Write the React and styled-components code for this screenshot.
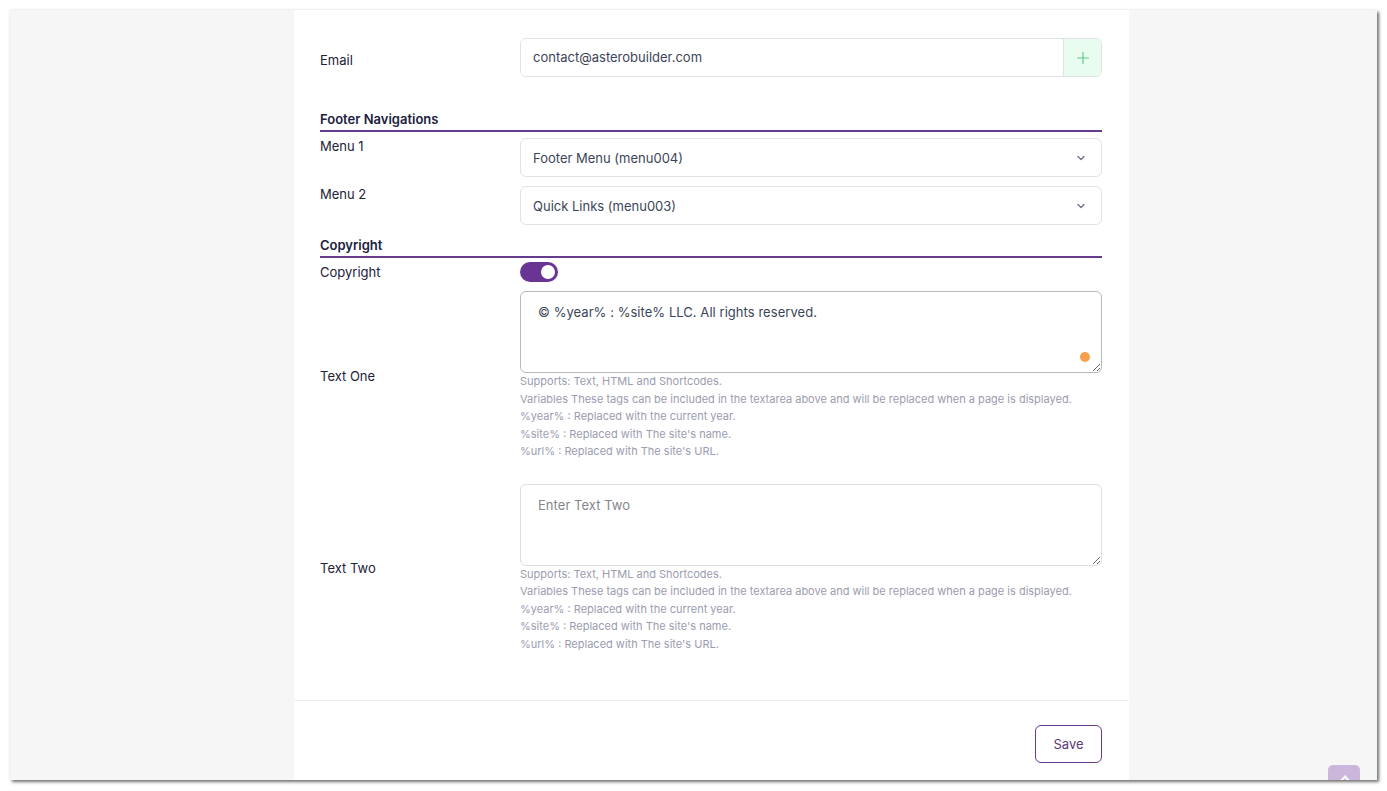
import React, { useState } from 'react';
import styled, { createGlobalStyle } from 'styled-components';

const GlobalStyle = createGlobalStyle`
  html, body {
    margin: 0;
    padding: 0;
    background: #ffffff;
  }
  body {
    font-family: Inter, "Noto Sans", "Liberation Sans", sans-serif;
    -webkit-font-smoothing: antialiased;
  }
  * {
    box-sizing: border-box;
  }
`;

const helpLines = [
  'Supports: Text, HTML and Shortcodes.',
  'Variables These tags can be included in the textarea above and will be replaced when a page is displayed.',
  '%year% : Replaced with the current year.',
  "%site% : Replaced with The site's name.",
  "%url% : Replaced with The site's URL.",
];

const ChevronDown = () => (
  <svg width="12" height="12" viewBox="0 0 24 24" fill="none" stroke="#6b6f80" strokeWidth="2.4" strokeLinecap="round" strokeLinejoin="round">
    <path d="M6 9l6 6 6-6" />
  </svg>
);

const PlusIcon = () => (
  <svg width="16" height="16" viewBox="0 0 24 24" fill="none" stroke="#5ec98c" strokeWidth="1.8" strokeLinecap="round">
    <path d="M12 4v16M4 12h16" />
  </svg>
);

const Help = () => (
  <HelpBox>
    {helpLines.map((line) => (
      <div key={line}>{line}</div>
    ))}
  </HelpBox>
);

export default function App() {
  const [copyright, setCopyright] = useState(true);

  return (
    <>
      <GlobalStyle />
      <Frame>
        <Panel>
          <Form>
            <Row $align="center" $gap="0">
              <Label $shift="4px">Email</Label>
              <InputGroup>
                <TextInput defaultValue="contact@asterobuilder.com" />
                <AddButton type="button">
                  <PlusIcon />
                </AddButton>
              </InputGroup>
            </Row>

            <SectionTitle $top="34px">Footer Navigations</SectionTitle>
            <Row $gap="6px">
              <Label>Menu 1</Label>
              <Select>
                <span>Footer Menu (menu004)</span>
                <ChevronDown />
              </Select>
            </Row>
            <Row $gap="9px">
              <Label>Menu 2</Label>
              <Select>
                <span>Quick Links (menu003)</span>
                <ChevronDown />
              </Select>
            </Row>

            <SectionTitle $top="12px">Copyright</SectionTitle>
            <Row $gap="4px">
              <Label $lh="20px">Copyright</Label>
              <Toggle $on={copyright} onClick={() => setCopyright(!copyright)} />
            </Row>

            <Row $align="center" $gap="9px">
              <Label>Text One</Label>
              <Field>
                <AreaWrap>
                  <TextArea $focused defaultValue="© %year% : %site% LLC. All rights reserved." />
                  <Dot />
                </AreaWrap>
                <Help />
              </Field>
            </Row>

            <Row $align="center" $gap="23px">
              <Label>Text Two</Label>
              <Field>
                <AreaWrap>
                  <TextArea placeholder="Enter Text Two" />
                </AreaWrap>
                <Help />
              </Field>
            </Row>
          </Form>

          <Footer>
            <SaveButton type="button">Save</SaveButton>
          </Footer>
        </Panel>
        <ScrollTop />
      </Frame>
    </>
  );
}

const Frame = styled.div`
  position: relative;
  margin: 10px;
  width: 1367px;
  height: 770px;
  background: #f6f6f6;
  overflow: hidden;
  display: flex;
  padding-left: 284px;
  box-shadow: 2px 2px 3px rgba(0, 0, 0, 0.55), 0 0 3px rgba(0, 0, 0, 0.08);
`;

const Panel = styled.div`
  width: 835px;
  background: #ffffff;
  display: flex;
  flex-direction: column;
`;

const Form = styled.div`
  display: flex;
  flex-direction: column;
  padding: 28px 27px 47px 26px;
`;

const Row = styled.div`
  display: grid;
  grid-template-columns: 200px 1fr;
  align-items: ${(p) => p.$align || 'start'};
  margin-top: ${(p) => p.$gap || '0'};
`;

const Label = styled.div`
  font-size: 13px;
  line-height: ${(p) => p.$lh || '16px'};
  padding-top: ${(p) => p.$shift || '0'};
  color: #1d2238;
`;

const SectionTitle = styled.div`
  margin-top: ${(p) => p.$top};
  padding-bottom: 3px;
  border-bottom: 2px solid #673b8d;
  font-size: 13px;
  line-height: 16px;
  font-weight: 600;
  color: #1b2140;
`;

const InputGroup = styled.div`
  display: flex;
  height: 39px;
  border: 1px solid #e0e2e7;
  border-radius: 6px;
  overflow: hidden;
`;

const TextInput = styled.input`
  flex: 1;
  border: none;
  outline: none;
  padding: 0 12px 1px;
  font-family: inherit;
  font-size: 13px;
  color: #3c4558;
  background: #fff;
`;

const AddButton = styled.button`
  width: 38px;
  border: none;
  border-left: 1px solid #dbe7df;
  background: #e8fcef;
  display: flex;
  align-items: center;
  justify-content: center;
  padding: 0;
`;

const Select = styled.div`
  height: 39px;
  border: 1px solid #e0e2e7;
  border-radius: 6px;
  padding: 0 14px 0 12px;
  display: flex;
  align-items: center;
  justify-content: space-between;
  font-size: 13px;
  color: #3c4558;
`;

const Toggle = styled.div`
  position: relative;
  width: 38px;
  height: 20px;
  border-radius: 10px;
  background: ${(p) => (p.$on ? '#6a3592' : '#d4d4dc')};
  cursor: pointer;

  &::after {
    content: '';
    position: absolute;
    top: 3px;
    left: ${(p) => (p.$on ? '21px' : '3px')};
    width: 14px;
    height: 14px;
    border-radius: 50%;
    background: #fff;
  }
`;

const Field = styled.div`
  display: flex;
  flex-direction: column;
`;

const AreaWrap = styled.div`
  position: relative;
  display: flex;
`;

const TextArea = styled.textarea`
  width: 100%;
  height: 82px;
  resize: vertical;
  border: 1px solid ${(p) => (p.$focused ? '#b9b9be' : '#dcdde3')};
  border-radius: 6px;
  padding: 12px 17px;
  font-family: inherit;
  font-size: 13px;
  line-height: 16px;
  letter-spacing: 0.05px;
  color: #3c4558;
  outline: none;

  &::placeholder {
    color: #85868c;
  }
`;

const Dot = styled.span`
  position: absolute;
  right: 12px;
  bottom: 11px;
  width: 10px;
  height: 10px;
  border-radius: 50%;
  background: #f6a04b;
`;

const HelpBox = styled.div`
  font-size: 11px;
  line-height: 17.5px;
  color: #9c9cb0;
`;

const Footer = styled.div`
  border-top: 1px solid #eeeeee;
  display: flex;
  justify-content: flex-end;
  padding: 24px 27px 0;
`;

const SaveButton = styled.button`
  width: 67px;
  height: 38px;
  border: 1px solid #6a3a8c;
  border-radius: 6px;
  background: #fff;
  font-family: inherit;
  font-size: 13px;
  color: #5a3a78;
  padding: 0;
`;

const ScrollTop = styled.div`
  position: absolute;
  left: 1318px;
  top: 755px;
  width: 32px;
  height: 32px;
  border-radius: 5px;
  background: #cbb7dc;

  &::after {
    content: '';
    position: absolute;
    left: 13px;
    top: 12px;
    width: 6px;
    height: 6px;
    border-left: 2px solid #fff;
    border-top: 2px solid #fff;
    transform: rotate(45deg);
  }
`;
